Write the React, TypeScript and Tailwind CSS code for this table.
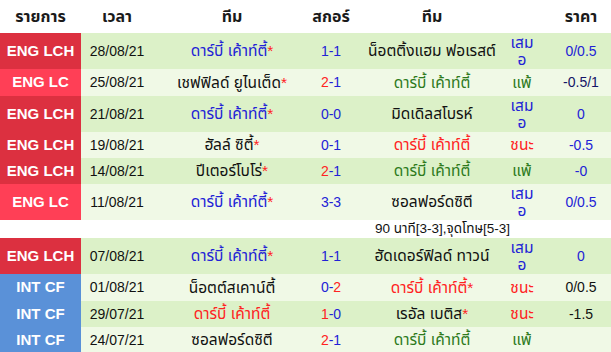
import React from 'react'

type Seg = { t: string; c: string }

interface Match {
  league: string
  leagueBg: string
  date: string
  home: Seg[]
  score: Seg[]
  away: Seg[]
  result: string
  price: Seg[]
  h: string
  bg: string
}

const BLUE = 'text-[#2222d6]'
const RED = 'text-[#ff2222]'
const GREEN = 'text-[#2d7a1c]'
const BLACK = 'text-[#111111]'
const NAVY = 'text-[#141466]'

const LCH = 'bg-[#dc3040]'
const LC = 'bg-[#ff3f56]'
const CF = 'bg-[#5a91d8]'

const DARK = 'bg-[#dcf1c8]'
const LIGHT = 'bg-[#f0f9e6]'

const derby = 'ดาร์บี้ เค้าท์ตี้'

const matches: Match[] = [
  {
    league: 'ENG LCH', leagueBg: LCH, date: '28/08/21',
    home: [{ t: derby, c: BLUE }, { t: '*', c: RED }],
    score: [{ t: '1-1', c: BLUE }],
    away: [{ t: 'น็อตติ้งแฮม ฟอเรสต์', c: BLACK }],
    result: 'draw', price: [{ t: '0/0.5', c: BLUE }], h: 'h-[36px]', bg: DARK,
  },
  {
    league: 'ENG LC', leagueBg: LC, date: '25/08/21',
    home: [{ t: 'เชฟฟิลด์ ยูไนเต็ด', c: BLACK }, { t: '*', c: RED }],
    score: [{ t: '2', c: RED }, { t: '-1', c: BLUE }],
    away: [{ t: derby, c: GREEN }],
    result: 'lose', price: [{ t: '-0.5/1', c: NAVY }], h: 'h-[27px]', bg: LIGHT,
  },
  {
    league: 'ENG LCH', leagueBg: LCH, date: '21/08/21',
    home: [{ t: derby, c: BLUE }, { t: '*', c: RED }],
    score: [{ t: '0-0', c: BLUE }],
    away: [{ t: 'มิดเดิลสโบรห์', c: BLACK }],
    result: 'draw', price: [{ t: '0', c: BLUE }], h: 'h-[36px]', bg: DARK,
  },
  {
    league: 'ENG LCH', leagueBg: LCH, date: '19/08/21',
    home: [{ t: 'ฮัลล์ ซิตี้', c: BLACK }, { t: '*', c: RED }],
    score: [{ t: '0-1', c: BLUE }],
    away: [{ t: derby, c: RED }],
    result: 'win', price: [{ t: '-0.5', c: BLUE }], h: 'h-[26px]', bg: LIGHT,
  },
  {
    league: 'ENG LCH', leagueBg: LCH, date: '14/08/21',
    home: [{ t: 'ปีเตอร์โบโร่', c: BLACK }, { t: '*', c: RED }],
    score: [{ t: '2', c: RED }, { t: '-1', c: BLUE }],
    away: [{ t: derby, c: GREEN }],
    result: 'lose', price: [{ t: '-0', c: BLUE }], h: 'h-[26px]', bg: DARK,
  },
  {
    league: 'ENG LC', leagueBg: LC, date: '11/08/21',
    home: [{ t: derby, c: BLUE }, { t: '*', c: RED }],
    score: [{ t: '3-3', c: BLUE }],
    away: [{ t: 'ซอลฟอร์ดซิตี', c: BLACK }],
    result: 'draw', price: [{ t: '0/0.5', c: BLUE }], h: 'h-[36px]', bg: LIGHT,
  },
  {
    league: 'ENG LCH', leagueBg: LCH, date: '07/08/21',
    home: [{ t: derby, c: BLUE }, { t: '*', c: RED }],
    score: [{ t: '1-1', c: BLUE }],
    away: [{ t: 'ฮัดเดอร์ฟิลด์ ทาวน์', c: BLACK }],
    result: 'draw', price: [{ t: '0', c: BLUE }], h: 'h-[36px]', bg: DARK,
  },
  {
    league: 'INT CF', leagueBg: CF, date: '01/08/21',
    home: [{ t: 'น็อตต์สเคาน์ตี้', c: BLACK }],
    score: [{ t: '0-', c: BLUE }, { t: '2', c: RED }],
    away: [{ t: derby, c: RED }, { t: '*', c: RED }],
    result: 'win', price: [{ t: '0/0.5', c: BLACK }], h: 'h-[27px]', bg: LIGHT,
  },
  {
    league: 'INT CF', leagueBg: CF, date: '29/07/21',
    home: [{ t: derby, c: RED }],
    score: [{ t: '1', c: RED }, { t: '-0', c: BLUE }],
    away: [{ t: 'เรอัล เบติส', c: BLACK }, { t: '*', c: RED }],
    result: 'win', price: [{ t: '-1.5', c: BLACK }], h: 'h-[26px]', bg: DARK,
  },
  {
    league: 'INT CF', leagueBg: CF, date: '24/07/21',
    home: [{ t: 'ซอลฟอร์ดซิตี', c: BLACK }],
    score: [{ t: '2', c: RED }, { t: '-1', c: BLUE }],
    away: [{ t: derby, c: GREEN }],
    result: 'lose', price: [], h: 'h-[26px]', bg: LIGHT,
  },
]

const cols = 'grid grid-cols-[81px_72px_158px_40px_155px_32px_73px]'

const Segs = ({ segs }: { segs: Seg[] }) => (
  <>
    {segs.map((s, i) => (
      <span key={i} className={s.c}>
        {s.t}
      </span>
    ))}
  </>
)

const Result = ({ r }: { r: string }) => {
  if (r === 'draw') {
    return (
      <span className={`${BLUE} leading-[17px]`}>
        เสม
        <br />อ
      </span>
    )
  }
  if (r === 'win') return <span className={RED}>ชนะ</span>
  return <span className={GREEN}>แพ้</span>
}

export default function App() {
  return (
    <div
      className="w-[611px] h-[352px] overflow-hidden bg-white text-[14px] text-[#111]"
      style={{ fontFamily: '"Liberation Sans", "Noto Sans Thai", Tahoma, "Noto Sans", sans-serif' }}
    >
      <div className={`${cols} h-[33px] items-center text-center font-bold text-[16px] text-[#1a1a1a]`}>
        <div>รายการ</div>
        <div>เวลา</div>
        <div>ทีม</div>
        <div>สกอร์</div>
        <div className="pl-[7px]">ทีม</div>
        <div></div>
        <div className="pl-[13px]">ราคา</div>
      </div>

      {matches.map((m, i) => (
        <React.Fragment key={i}>
          <div className={`${cols} ${m.h} ${m.bg} items-stretch text-center`}>
            <div className={`${m.leagueBg} flex items-center justify-center text-white font-bold text-[15px]`}>
              {m.league}
            </div>
            <div className="flex items-center justify-center">{m.date}</div>
            <div className="flex items-center justify-center whitespace-nowrap text-[15.5px]">
              <span>
                <Segs segs={m.home} />
              </span>
            </div>
            <div className="flex items-center justify-center">
              <span>
                <Segs segs={m.score} />
              </span>
            </div>
            <div className="flex items-center justify-center whitespace-nowrap pl-[7px] text-[15.5px]">
              <span>
                <Segs segs={m.away} />
              </span>
            </div>
            <div className="flex items-center justify-center whitespace-nowrap text-[15.5px]">
              <Result r={m.result} />
            </div>
            <div className="flex items-center justify-center pl-[13px]">
              <span>
                <Segs segs={m.price} />
              </span>
            </div>
          </div>
          {i === 5 && (
            <div className={`${cols} h-[18px] items-center bg-white`}>
              <div className="col-start-4 col-span-4 text-left pl-[64px] leading-[18px] text-[13.5px] whitespace-nowrap text-[#111]">
                90 นาที[3-3],จุดโทษ[5-3]
              </div>
            </div>
          )}
        </React.Fragment>
      ))}
    </div>
  )
}
